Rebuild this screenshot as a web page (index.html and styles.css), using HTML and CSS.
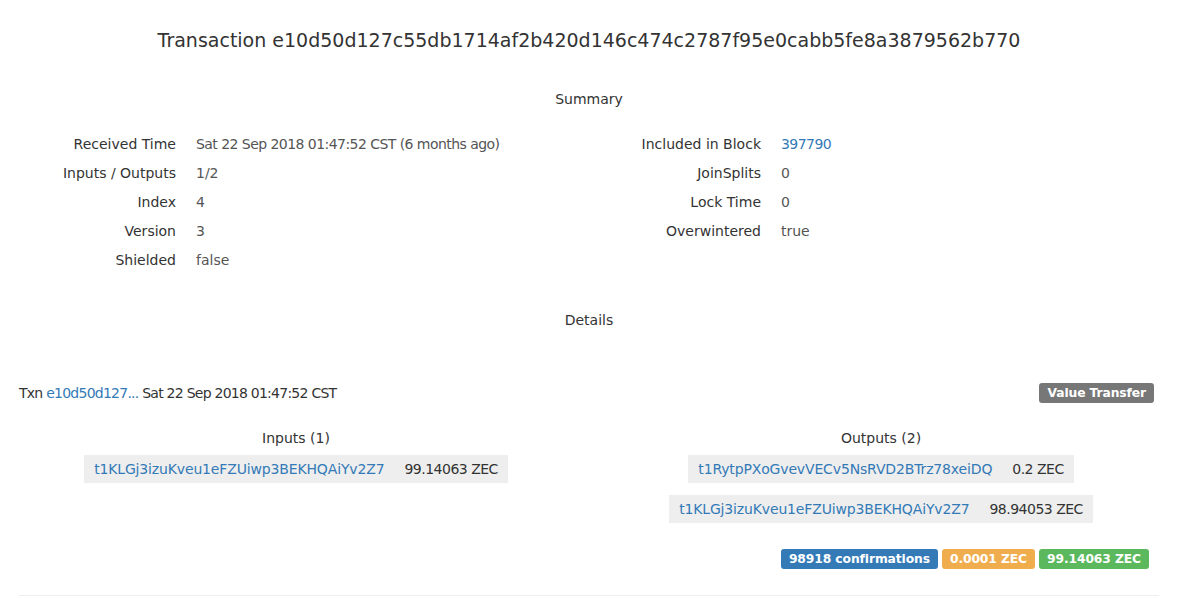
FILE: index.html
```html
<!DOCTYPE html>
<html>
<head>
<meta charset="utf-8">
<link rel="stylesheet" href="styles.css">
</head>
<body>
<div class="page">
  <h1 class="title">Transaction e10d50d127c55db1714af2b420d146c474c2787f95e0cabb5fe8a3879562b770</h1>

  <h2 class="section summary-h">Summary</h2>
  <div class="summary">
    <dl class="kv">
      <dt>Received Time</dt><dd class="tight">Sat 22 Sep 2018 01:47:52 CST (6 months ago)</dd>
      <dt>Inputs / Outputs</dt><dd>1/2</dd>
      <dt>Index</dt><dd>4</dd>
      <dt>Version</dt><dd>3</dd>
      <dt>Shielded</dt><dd>false</dd>
    </dl>
    <dl class="kv">
      <dt>Included in Block</dt><dd class="tight"><a href="#">397790</a></dd>
      <dt>JoinSplits</dt><dd>0</dd>
      <dt>Lock Time</dt><dd>0</dd>
      <dt>Overwintered</dt><dd>true</dd>
    </dl>
  </div>

  <h2 class="section details-h">Details</h2>

  <div class="tx">
    <div class="tx-head">
      <div class="tx-id">Txn <a href="#">e10d50d127...</a> Sat 22 Sep 2018 01:47:52 CST</div>
      <span class="badge badge-gray">Value Transfer</span>
    </div>
    <div class="io">
      <div class="io-col">
        <div class="io-title">Inputs (1)</div>
        <div class="io-item"><a href="#">t1KLGj3izuKveu1eFZUiwp3BEKHQAiYv2Z7</a><span class="amt">99.14063 ZEC</span></div>
      </div>
      <div class="io-col">
        <div class="io-title">Outputs (2)</div>
        <div class="io-item"><a href="#">t1RytpPXoGvevVECv5NsRVD2BTrz78xeiDQ</a><span class="amt">0.2 ZEC</span></div>
        <div class="io-item"><a href="#">t1KLGj3izuKveu1eFZUiwp3BEKHQAiYv2Z7</a><span class="amt">98.94053 ZEC</span></div>
      </div>
    </div>
    <div class="badges">
      <span class="badge badge-blue">98918 confirmations</span>
      <span class="badge badge-orange">0.0001 ZEC</span>
      <span class="badge badge-green">99.14063 ZEC</span>
    </div>
  </div>
  <div class="rule"></div>
</div>
</body>
</html>
```

FILE: styles.css
```css
html, body {
  margin: 0;
  padding: 0;
  background: #fff;
}
body {
  font-family: "DejaVu Sans", "Open Sans", sans-serif;
  font-size: 14px;
  color: #333;
}
a {
  color: #337ab7;
  text-decoration: none;
}
.page {
  width: 1140px;
  margin-left: 19px;
  display: flex;
  flex-direction: column;
}
.title {
  margin: 28px 0 0;
  font-size: 19px;
  line-height: 24px;
  font-weight: normal;
  text-align: center;
  color: #333;
}
.section {
  margin: 0;
  font-size: 14px;
  line-height: 20px;
  font-weight: normal;
  text-align: center;
  color: #333;
}
.summary-h {
  margin-top: 37px;
}
.summary {
  margin-top: 20px;
  display: grid;
  grid-template-columns: 585px 555px;
}
.kv {
  margin: 0;
  display: grid;
  grid-template-columns: 157px 1fr;
  grid-auto-rows: 29px;
  column-gap: 20px;
  align-items: center;
}
.kv dt {
  text-align: right;
  color: #333;
  white-space: nowrap;
}
.kv dd {
  margin: 0;
  color: #555;
  white-space: nowrap;
}
.tight {
  letter-spacing: -0.55px;
}
.details-h {
  margin-top: 36px;
}
.tx {
  margin-top: 53px;
  display: flex;
  flex-direction: column;
}
.tx-head {
  display: flex;
  justify-content: space-between;
  align-items: center;
  height: 20px;
  padding-right: 5px;
}
.tx-id {
  line-height: 20px;
  color: #333;
  letter-spacing: -0.75px;
}
.io {
  margin-top: 25px;
  display: grid;
  grid-template-columns: 554px 554px;
  column-gap: 31px;
}
.io-col {
  display: flex;
  flex-direction: column;
  align-items: center;
  gap: 12px;
}
.io-title {
  line-height: 20px;
  margin-bottom: -5px;
  color: #333;
}
.io-item {
  display: flex;
  gap: 20px;
  height: 28px;
  line-height: 28px;
  padding: 0 10px;
  background: #eeeeee;
  white-space: nowrap;
}
.io-item a {
  letter-spacing: -0.15px;
}
.amt {
  color: #333;
  letter-spacing: -0.5px;
}
.badges {
  margin-top: 26px;
  display: flex;
  justify-content: flex-end;
  gap: 4px;
  padding-right: 10px;
}
.badge {
  display: inline-block;
  height: 20px;
  line-height: 20px;
  padding: 0 8px;
  border-radius: 3px;
  color: #fff;
  font-weight: bold;
  font-size: 12.3px;
  letter-spacing: -0.1px;
  white-space: nowrap;
}
.badge-gray {
  background: #777;
  padding: 0 8px;
}
.badge-blue {
  background: #337ab7;
}
.badge-orange {
  background: #f0ad4e;
}
.badge-green {
  background: #5cb85c;
}
.rule {
  margin-top: 26px;
  height: 1px;
  background: #eeeeee;
}
```
